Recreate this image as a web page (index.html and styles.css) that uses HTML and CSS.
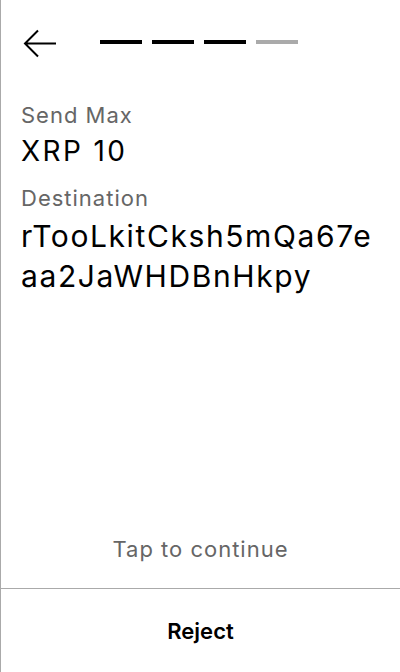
FILE: index.html
```html
<!DOCTYPE html>
<html>
<head>
<meta charset="utf-8">
<link rel="stylesheet" href="styles.css">
</head>
<body>
<div class="screen">
  <div class="header">
    <svg class="back" width="40" height="40" viewBox="0 0 40 40">
      <path d="M5 20.5 H36 M18 7.5 L5 20.5 L18 33.5" fill="none" stroke="#000" stroke-width="2"/>
    </svg>
    <div class="steps">
      <span class="step done"></span>
      <span class="step done"></span>
      <span class="step done"></span>
      <span class="step"></span>
    </div>
  </div>
  <div class="content">
    <div class="label">Send Max</div>
    <div class="value amount">XRP 10</div>
    <div class="label">Destination</div>
    <div class="value address">rTooLkitCksh5mQa67eaa2JaWHDBnHkpy</div>
  </div>
  <div class="tap">Tap to continue</div>
  <div class="footer">
    <button class="reject">Reject</button>
  </div>
</div>
</body>
</html>
```

FILE: styles.css
```css
* { box-sizing: border-box; }
html, body { margin: 0; padding: 0; background: #fff; }
body { font-family: Inter, "Noto Sans", sans-serif; color: #000; }
.screen {
  width: 400px;
  height: 672px;
  border-left: 1px solid #aaa;
  display: flex;
  flex-direction: column;
}
.header {
  display: flex;
  align-items: flex-start;
  padding: 23px 0 0 19px;
  height: 101px;
}
.back { display: block; }
.steps {
  display: flex;
  gap: 10px;
  margin-left: 40px;
  margin-top: 17px;
}
.step {
  width: 42px;
  height: 4px;
  background: #aaa;
}
.step.done { background: #000; }
.content {
  flex: 1;
  padding: 0 20px 0 20px;
}
.label {
  font-size: 22px;
  line-height: 28px;
  letter-spacing: 1px;
  color: #666;
}
.value { margin-top: 4px; }
.amount {
  font-size: 28px;
  line-height: 36px;
  letter-spacing: 2.4px;
  margin-bottom: 15px;
}
.address {
  font-size: 30px;
  line-height: 40px;
  letter-spacing: 1.6px;
  word-break: break-all;
}
.tap {
  text-align: center;
  font-size: 22px;
  line-height: 28px;
  letter-spacing: 1px;
  color: #666;
  padding-bottom: 25px;
}
.footer {
  border-top: 1px solid #aaa;
  height: 84px;
  display: flex;
}
.reject {
  flex: 1;
  border: 0;
  background: none;
  font-family: Inter, "Noto Sans", sans-serif;
  font-size: 22px;
  font-weight: 600;
  color: #000;
  padding: 0;
}
```
